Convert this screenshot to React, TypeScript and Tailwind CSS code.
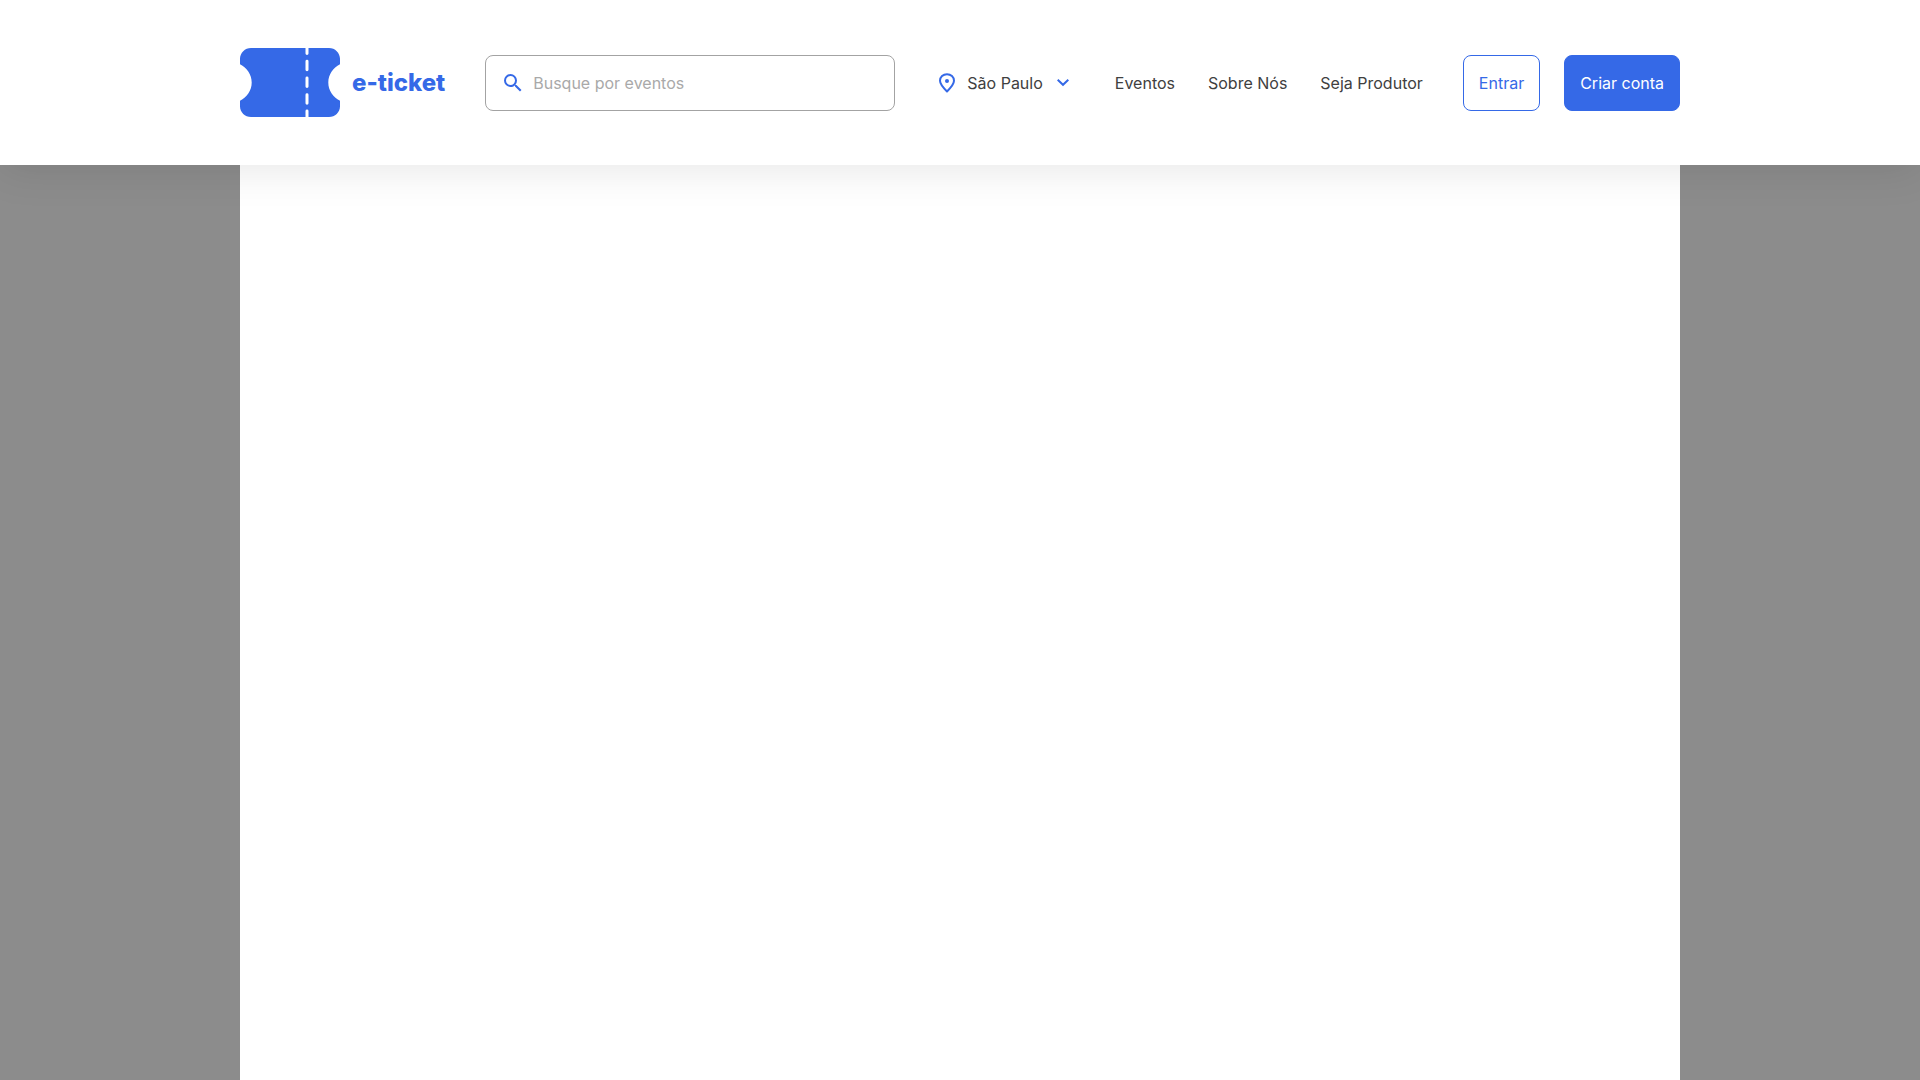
import { clsx } from 'clsx'

const links = [
  { label: 'Eventos', href: '#eventos' },
  { label: 'Sobre Nós', href: '#sobre' },
  { label: 'Seja Produtor', href: '#produtor' },
]

function Logo() {
  return (
    <a href="#" className="flex items-center gap-3 text-[#3569e7]">
      <svg width="100" height="69" viewBox="0 0 100 70" preserveAspectRatio="none" fill="none">
        <path
          d="M11 0H89C95 0 100 5 100 11V16.500C93 20 88.300 27 88.300 35C88.300 43 93 50 100 53.500V59C100 65 95 70 89 70H11C5 70 0 65 0 59V53.500C7 50 11.700 43 11.700 35C11.700 27 7 20 0 16.500V11C0 5 5 0 11 0Z"
          fill="currentColor"
        />
        <path
          d="M67 0V5.500M67 13.500V22M67 30.500V39M67 47.500V56M67 64V70"
          stroke="white"
          strokeWidth="3"
          strokeLinecap="round"
        />
      </svg>
      <span className="text-2xl font-extrabold">e-ticket</span>
    </a>
  )
}

function SearchIcon() {
  return (
    <svg width="24" height="24" viewBox="0 0 24 24" fill="#3569e7">
      <path d="M15.500 14h-.79l-.28-.27A6.471 6.471 0 0 0 16 9.500 6.500 6.500 0 1 0 9.500 16c1.610 0 3.090-.59 4.230-1.570l.27.28v.79l5 4.990L20.490 19l-4.990-5zm-6 0C7.010 14 5 11.990 5 9.500S7.010 5 9.500 5 14 7.010 14 9.500 11.990 14 9.500 14z" />
    </svg>
  )
}

function Search() {
  return (
    <label className="flex h-14 min-w-0 flex-1 items-center gap-2 rounded-lg border border-[#a3a3a3] px-[15px]">
      <SearchIcon />
      <input
        type="text"
        aria-label="Busque por eventos"
        placeholder="Busque por eventos"
        className="min-w-0 flex-1 outline-none placeholder:text-[#a9a9a9]"
      />
    </label>
  )
}

function LocationButton() {
  return (
    <button type="button" className="flex items-center gap-2">
      <svg width="24" height="24" viewBox="0 0 24 24" fill="none">
        <path
          d="M12 20.500C9.500 18 5 13.500 5 9.800C5 5.900 8.100 3.200 12 3.200C15.900 3.200 19 5.900 19 9.800C19 13.500 14.500 18 12 20.500Z"
          stroke="#3569e7"
          strokeWidth="2"
          strokeLinejoin="round"
        />
        <circle cx="12" cy="10" r="2" fill="#3569e7" />
      </svg>
      São Paulo
      <svg width="24" height="24" viewBox="0 0 24 24" fill="none">
        <path d="M6.700 8.800L12 13.800L17.300 8.800" stroke="#3569e7" strokeWidth="2" />
      </svg>
    </button>
  )
}

function Button({ label, outlined }: { label: string; outlined?: boolean }) {
  return (
    <button
      type="button"
      className={clsx(
        'h-14 rounded-lg border border-[#3569e7] px-[15px]',
        outlined ? 'bg-white text-[#3569e7]' : 'bg-[#3569e7] text-white'
      )}
    >
      {label}
    </button>
  )
}

export default function App() {
  return (
    <div className="flex min-h-screen flex-col bg-[#8c8c8c] font-['Inter',sans-serif] text-base text-[#404040]">
      <header className="relative bg-white py-12 shadow-[0_4px_40px_rgba(0,0,0,0.1)]">
        <div className="mx-auto flex max-w-[1440px] items-center gap-10 whitespace-nowrap">
          <Logo />
          <Search />
          <LocationButton />
          <nav className="flex gap-[33px]">
            {links.map(({ label, href }) => (
              <a key={href} href={href}>
                {label}
              </a>
            ))}
          </nav>
          <div className="flex gap-6">
            <Button label="Entrar" outlined />
            <Button label="Criar conta" />
          </div>
        </div>
      </header>
      <main className="mx-auto w-full max-w-[1440px] flex-1 bg-white" />
    </div>
  )
}
